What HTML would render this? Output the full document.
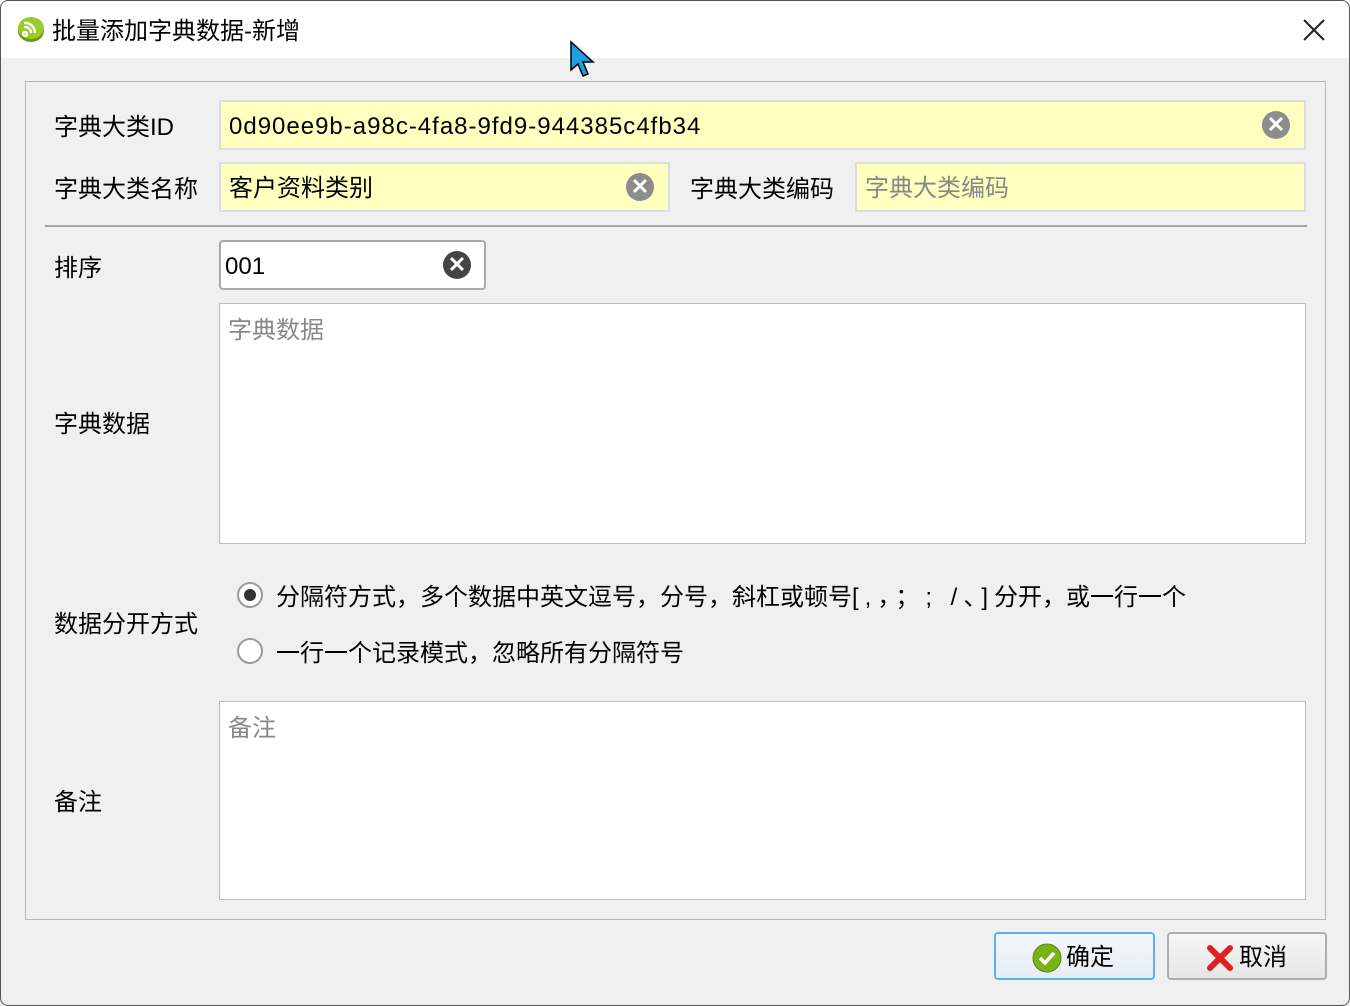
<!DOCTYPE html>
<html><head><meta charset="utf-8"><style>
*{margin:0;padding:0;box-sizing:border-box}
body{width:1350px;height:1006px;background:#fff;font-family:"Liberation Sans","Noto Sans CJK SC",sans-serif;font-size:24px;color:#000;position:relative;overflow:hidden}
.win{position:absolute;left:0;top:0;width:1350px;height:1006px;background:#f0f0f0;overflow:hidden}
.frame{position:absolute;left:0;top:0;width:1350px;height:1006px;border:1px solid #555;border-radius:8px;pointer-events:none}
.title{position:absolute;left:0;top:0;width:1350px;height:58px;background:#fff}
.a{position:absolute;white-space:nowrap}
.lbl{position:absolute;line-height:30px;white-space:nowrap;margin-top:2px}
.inp{position:absolute;line-height:30px;white-space:nowrap}
.y{background:#ffffc0;border:2px solid #dcdcdc}
.clr{position:absolute;width:28px;height:28px;border-radius:50%;color:#fff;font-size:22px;font-weight:bold;text-align:center;line-height:28px}
.ta{position:absolute;background:#fff;border:1px solid #bcbcbc}
.ph{color:#888}
.radio{position:absolute;width:26px;height:26px;border-radius:50%;border:2px solid #9a9a9a;background:#fff}
.btn{position:absolute;height:48px;border:2px solid #adadad;border-radius:4px;background:linear-gradient(#f6f6f6,#e6e6e6);line-height:44px;text-align:center}
</style></head><body>
<div class="win">
<div class="title"></div>
<svg class="a" style="left:16px;top:14px" width="30" height="30" viewBox="0 0 30 30"><ellipse cx="15" cy="17" rx="13" ry="11" fill="#6a9a10"/><ellipse cx="15" cy="14" rx="13" ry="11" fill="#9cc92b"/><path d="M9 18a2 2 0 1 0 .1 0M8 13a6 6 0 0 1 7 6M8 9a10 10 0 0 1 11 10" stroke="#fff" stroke-width="2.4" fill="none"/></svg>
<div class="lbl" style="left:52px;top:15px">批量添加字典数据-新增</div>
<svg class="a" style="left:1302px;top:18px" width="24" height="24"><path d="M2 2L22 22M22 2L2 22" stroke="#222" stroke-width="2"/></svg>
<svg class="a" style="left:569px;top:40px" width="28" height="40" viewBox="0 0 28 40"><path d="M2 2L2 30L9 24L14 36L19 34L14 22L24 22Z" fill="#1fa0e0" stroke="#000" stroke-width="1.5"/></svg>

<div class="a" style="left:25px;top:81px;width:1301px;height:839px;border:1px solid #b8b8b8"></div>

<div class="lbl" style="left:54px;top:111px">字典大类ID</div>
<div class="inp y" style="left:219px;top:100px;width:1087px;height:50px;padding:10px 0 0 8px;letter-spacing:1px">0d90ee9b-a98c-4fa8-9fd9-944385c4fb34</div>
<div class="clr" style="left:1262px;top:111px;background:#8c8c8c">✕</div>

<div class="lbl" style="left:54px;top:173px">字典大类名称</div>
<div class="inp y" style="left:219px;top:162px;width:451px;height:50px;padding:10px 0 0 8px">客户资料类别</div>
<div class="clr" style="left:626px;top:173px;background:#8c8c8c">✕</div>
<div class="lbl" style="left:690px;top:173px">字典大类编码</div>
<div class="inp y ph" style="left:855px;top:162px;width:451px;height:50px;padding:10px 0 0 8px">字典大类编码</div>

<div class="a" style="left:45px;top:225px;width:1262px;height:2px;background:#a8a8a8"></div>

<div class="lbl" style="left:54px;top:252px">排序</div>
<div class="inp" style="left:219px;top:240px;width:267px;height:50px;background:#fff;border:2px solid #aaa;border-radius:4px;padding:10px 0 0 4px">001</div>
<div class="clr" style="left:443px;top:251px;background:#444">✕</div>

<div class="ta" style="left:219px;top:303px;width:1087px;height:241px"></div>
<div class="lbl ph" style="left:228px;top:314px">字典数据</div>
<div class="lbl" style="left:54px;top:408px">字典数据</div>

<div class="lbl" style="left:54px;top:608px">数据分开方式</div>
<div class="radio" style="left:237px;top:582px"><div style="position:absolute;left:5px;top:5px;width:12px;height:12px;border-radius:50%;background:#333"></div></div>
<div class="lbl" style="left:276px;top:581px">分隔符方式，多个数据中英文逗号，分号，斜杠或顿号<span style="letter-spacing:6px">[,，；;  /、]</span>分开，或一行一个</div>
<div class="radio" style="left:237px;top:638px"></div>
<div class="lbl" style="left:276px;top:637px">一行一个记录模式，忽略所有分隔符号</div>

<div class="ta" style="left:219px;top:701px;width:1087px;height:199px"></div>
<div class="lbl ph" style="left:228px;top:712px">备注</div>
<div class="lbl" style="left:54px;top:786px">备注</div>

<div class="btn" style="left:994px;top:932px;width:161px;border-color:#5ab0f0;background:linear-gradient(#f4f8fc,#e4ecf4)">
<svg style="position:absolute;left:36px;top:9px" width="30" height="30"><circle cx="15" cy="15" r="14" fill="#7ab317" stroke="#5a8a10"/><path d="M8 15l5 5 9-10" stroke="#fff" stroke-width="3.5" fill="none"/></svg>
<span style="position:absolute;left:70px;top:2px">确定</span></div>
<div class="btn" style="left:1167px;top:932px;width:160px">
<svg style="position:absolute;left:36px;top:9px" width="30" height="30"><path d="M5 5L25 25M25 5L5 25" stroke="#e02020" stroke-width="6" stroke-linecap="round"/></svg>
<span style="position:absolute;left:70px;top:2px">取消</span></div>
</div>
<div class="frame"></div>
</body></html>
